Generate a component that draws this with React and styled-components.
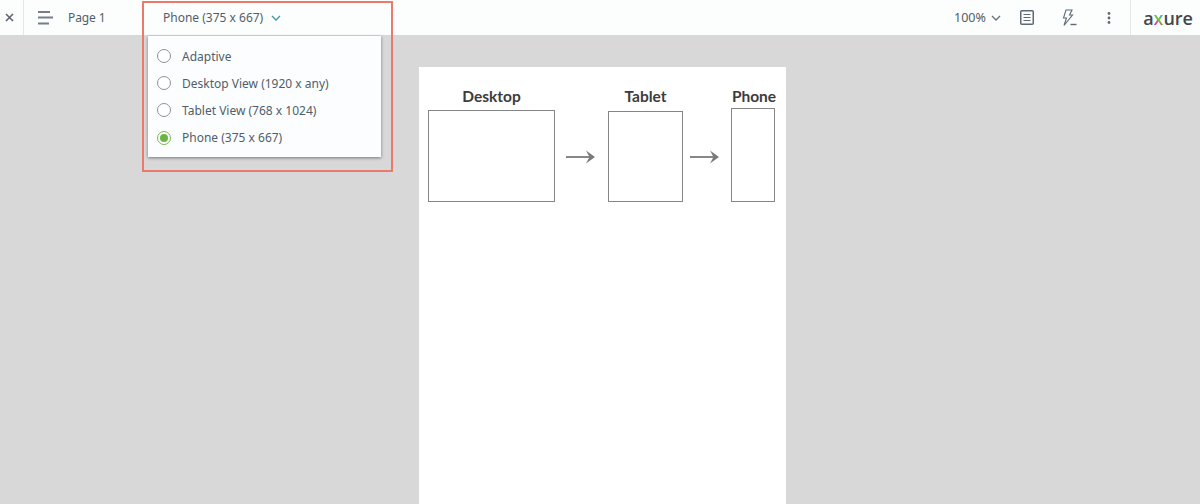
import React from "react";
import styled, { createGlobalStyle } from "styled-components";

const GlobalStyle = createGlobalStyle`
  html, body { margin: 0; padding: 0; height: 100%; }
  body { font-family: "Noto Sans", "Open Sans", sans-serif; background: #d8d8d8; overflow: hidden; }
  #root { height: 100%; }
`;

const views = [
  { id: "adaptive", label: "Adaptive" },
  { id: "desktop", label: "Desktop View (1920 x any)" },
  { id: "tablet", label: "Tablet View (768 x 1024)" },
  { id: "phone", label: "Phone (375 x 667)", selected: true },
];

const Shell = styled.div`
  position: relative;
  width: 1200px;
  height: 504px;
  overflow: hidden;
  display: flex;
  flex-direction: column;
  background: #d8d8d8;
`;

const Toolbar = styled.header`
  height: 35px;
  flex: none;
  display: flex;
  align-items: center;
  background: #fcfdfd;
  color: #515d6b;
`;

const CloseCell = styled.div`
  width: 19px;
  height: 100%;
  flex: none;
  display: flex;
  align-items: center;
  justify-content: center;
  padding-right: 4px;
  border-right: 1px solid #e4e6e8;
`;

const MenuButton = styled.div`
  margin-left: 14px;
  width: 16px;
  display: flex;
  line-height: 0;
`;

const PageName = styled.span`
  margin-left: 14px;
  width: 95px;
  font-size: 12px;
  letter-spacing: -0.1px;
`;

const ViewPicker = styled.div`
  display: flex;
  align-items: center;
  gap: 8px;
  font-size: 12px;
`;

const ToolGroup = styled.div`
  margin-left: auto;
  height: 100%;
  display: flex;
  align-items: center;
`;

const Zoom = styled.div`
  display: flex;
  align-items: center;
  gap: 5px;
  width: 49px;
  font-size: 12.5px;
`;

const ToolIcon = styled.div`
  width: ${(p) => p.$w}px;
  margin-left: ${(p) => p.$ml}px;
  display: flex;
  justify-content: center;
  line-height: 0;
`;

const LogoCell = styled.div`
  margin-left: 19px;
  width: 70px;
  height: 100%;
  display: flex;
  align-items: center;
  justify-content: center;
  padding-left: 5px;
  border-left: 1px solid #e4e6e8;
  box-sizing: border-box;
`;

const Logo = styled.span`
  font-family: "Open Sans", sans-serif;
  font-size: 18px;
  font-weight: 600;
  letter-spacing: -0.1px;
  color: #3f4850;
`;

const LogoX = styled.span`
  background: linear-gradient(45deg, #e0458f 0 42%, #7dbb42 42% 55%, #39b8c9 55%);
  -webkit-background-clip: text;
  background-clip: text;
  color: transparent;
`;

const Canvas = styled.main`
  flex: 1;
  display: flex;
  justify-content: center;
  padding-top: 32px;
  padding-left: 5px;
`;

const Sheet = styled.section`
  width: 367px;
  box-sizing: border-box;
  background: #fff;
  padding: 20px 0 0 9px;
`;

const Diagram = styled.div`
  display: flex;
  align-items: flex-end;
  font-family: Lato, sans-serif;
`;

const Device = styled.div`
  width: ${(p) => p.$w}px;
  display: flex;
  flex-direction: column;
  align-items: center;
`;

const DeviceName = styled.h2`
  margin: 0;
  font-size: 15.5px;
  line-height: 18px;
  font-weight: 700;
  color: #3c3c3c;
  white-space: nowrap;
  transform: translateX(${(p) => p.$shift || 0}px);
`;

const DeviceBox = styled.div`
  width: 100%;
  height: ${(p) => p.$h}px;
  margin-top: ${(p) => p.$gap}px;
  box-sizing: border-box;
  border: 1px solid #858585;
`;

const ArrowSlot = styled.div`
  width: ${(p) => p.$w}px;
  height: 91px;
  display: flex;
  align-items: center;
  justify-content: center;
  padding-right: ${(p) => p.$pr}px;
  box-sizing: border-box;
  line-height: 0;
`;

const Dropdown = styled.ul`
  position: absolute;
  left: 148px;
  top: 36px;
  width: 233px;
  height: 121px;
  margin: 0;
  padding: 6.5px 0 0 9px;
  box-sizing: border-box;
  list-style: none;
  background: #fbfdfe;
  box-shadow: 0 1px 3px rgba(0, 0, 0, 0.45);
`;

const Option = styled.li`
  height: 27.2px;
  display: flex;
  align-items: center;
  gap: 11px;
  font-size: 12px;
  color: #515d6b;
`;

const Radio = styled.span`
  width: 14px;
  height: 14px;
  box-sizing: border-box;
  border-radius: 50%;
  border: 1px solid ${(p) => (p.$on ? "#74bb48" : "#8b939b")};
  background: #fff;
  display: flex;
  align-items: center;
  justify-content: center;

  &::after {
    content: "";
    display: ${(p) => (p.$on ? "block" : "none")};
    width: 8px;
    height: 8px;
    border-radius: 50%;
    background: #6cb544;
  }
`;

const Highlight = styled.div`
  position: absolute;
  left: 142px;
  top: 1px;
  width: 251px;
  height: 171px;
  box-sizing: border-box;
  border: 2px solid #ec7a6c;
  pointer-events: none;
`;

const Arrow = () => (
  <svg width="29" height="14" viewBox="0 0 29 14" fill="#7a7a7a">
    <path d="M0 6.1H25V7.9H0Z" />
    <path d="M20 0.5 L29 7 L20 13.5 L23.5 7Z" />
  </svg>
);

const Chevron = ({ color }) => (
  <svg width="10" height="6" viewBox="0 0 10 6" fill="none" stroke={color} strokeWidth="1.3">
    <path d="M1 1 L5 5 L9 1" />
  </svg>
);

export default function App() {
  return (
    <Shell>
      <GlobalStyle />
      <Toolbar>
        <CloseCell>
          <svg width="9" height="9" viewBox="0 0 9 9" stroke="#5a6570" strokeWidth="1.6">
            <path d="M1 1 L8 8 M8 1 L1 8" />
          </svg>
        </CloseCell>
        <MenuButton>
          <svg width="16" height="15" viewBox="0 0 16 15" stroke="#747f8a" strokeWidth="1.8">
            <path d="M0 2H12M0 7.5H15M0 13.5H11" />
          </svg>
        </MenuButton>
        <PageName>Page 1</PageName>
        <ViewPicker>
          Phone (375 x 667)
          <Chevron color="#3f9aa8" />
        </ViewPicker>
        <ToolGroup>
          <Zoom>
            100%
            <Chevron color="#66717c" />
          </Zoom>
          <ToolIcon $w={14} $ml={17}>
            <svg width="14" height="15" viewBox="0 0 14 15" fill="none" stroke="#5f6a75">
              <rect x="0.75" y="0.75" width="12.5" height="13.5" rx="1" strokeWidth="1.5" />
              <path d="M3.5 4.5H10.5M3.5 7.5H10.5M3.5 10.5H10.5" />
            </svg>
          </ToolIcon>
          <ToolIcon $w={16} $ml={27}>
            <svg width="16" height="18" viewBox="0 0 16 18" fill="none" stroke="#5f6a75" strokeWidth="1.1">
              <path d="M5 1H11L8.5 6H11.5L3 16.5L5.5 9H2.5Z" />
              <path d="M9.5 15.5H15.5" strokeWidth="1.4" />
            </svg>
          </ToolIcon>
          <ToolIcon $w={4} $ml={30}>
            <svg width="4" height="12" viewBox="0 0 4 12" fill="#5f6a75">
              <circle cx="2" cy="1.5" r="1.4" />
              <circle cx="2" cy="6" r="1.4" />
              <circle cx="2" cy="10.5" r="1.4" />
            </svg>
          </ToolIcon>
          <LogoCell>
            <Logo>
              a<LogoX>x</LogoX>ure
            </Logo>
          </LogoCell>
        </ToolGroup>
      </Toolbar>
      <Canvas>
        <Sheet>
          <Diagram>
            <Device $w={127}>
              <DeviceName>Desktop</DeviceName>
              <DeviceBox $h={92} $gap={5} />
            </Device>
            <ArrowSlot $w={53} $pr={2}>
              <Arrow />
            </ArrowSlot>
            <Device $w={75}>
              <DeviceName>Tablet</DeviceName>
              <DeviceBox $h={91} $gap={6} />
            </Device>
            <ArrowSlot $w={48} $pr={6}>
              <Arrow />
            </ArrowSlot>
            <Device $w={44}>
              <DeviceName $shift={1}>Phone</DeviceName>
              <DeviceBox $h={94} $gap={3} />
            </Device>
          </Diagram>
        </Sheet>
      </Canvas>
      <Dropdown>
        {views.map((view) => (
          <Option key={view.id}>
            <Radio $on={view.selected} />
            {view.label}
          </Option>
        ))}
      </Dropdown>
      <Highlight />
    </Shell>
  );
}
